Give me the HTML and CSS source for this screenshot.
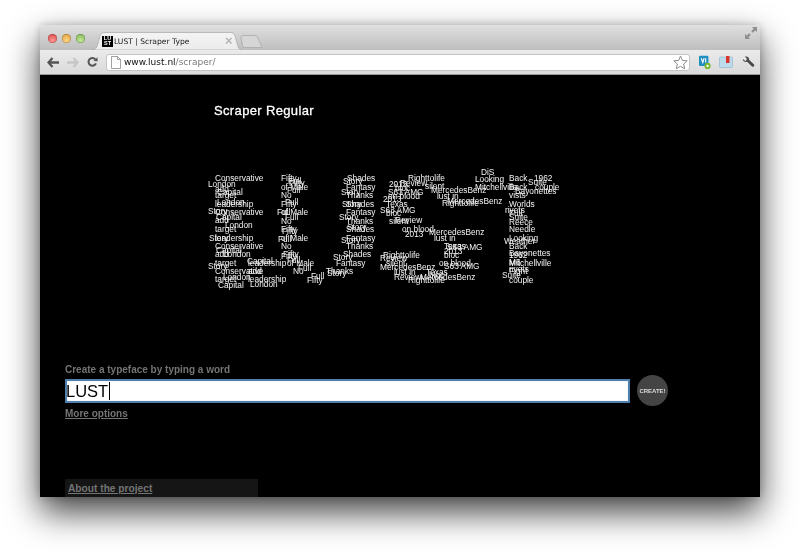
FILE: index.html
```html
<!DOCTYPE html>
<html lang="en">
<head>
  <meta charset="UTF-8" />
  <title>LUST | Scraper Type</title>
  <link rel="stylesheet" href="styles.css">
</head>
<body>

  <div class="window">
    <div class="titlebar">
      <div class="lights">
        <span class="light red"></span>
        <span class="light yellow"></span>
        <span class="light green"></span>
      </div>
      <div class="tab">
        <svg class="tab-shape" width="150" height="18" viewBox="0 0 150 18">
          <defs>
            <linearGradient id="tabfill" x1="0" y1="0" x2="0" y2="1">
              <stop offset="0" stop-color="#f4f4f4"/>
              <stop offset="1" stop-color="#ebebeb"/>
            </linearGradient>
          </defs>
          <path d="M0 18 C4 18 5 15 6 11 L8 4 C9 1 10.500 0.500 13 0.500 L138 0.500 C140.500 0.500 142 1 143 4 L145 11 C146 15 147 18 150 18 Z" fill="url(#tabfill)" stroke="#a8a8a8" stroke-width="0.7"/>
        </svg>
        <div class="favicon"><span>LU</span><span>ST</span></div>
        <div class="tab-title">LUST | Scraper Type</div>
        <div class="tab-close">×</div>
      </div>
      <svg class="newtab" width="24" height="13" viewBox="0 0 24 13">
        <path d="M3 12.500 L1 3 C0.800 1.400 1.600 0.500 3 0.500 L15 0.500 C16.400 0.500 17 1 17.600 2.400 L22 12.500 Z" fill="#d6d6d6" stroke="#a9a9a9" stroke-width="0.8"/>
      </svg>
      <svg class="expand" width="12" height="12" viewBox="0 0 12 12">
        <path d="M7 0 H12 V5 L10.200 3.400 L7.800 5.800 L6.200 4.200 L8.600 1.800 Z M5 12 H0 V7 L1.800 8.600 L4.200 6.200 L5.800 7.800 L3.400 10.200 Z" fill="#8f8f8f"/>
      </svg>
    </div>

    <div class="toolbar">
      <svg class="nav" width="12" height="11" viewBox="0 0 12 11">
        <path d="M5.500 1 L1.500 5.500 L5.500 10 M2 5.500 H12" fill="none" stroke="#555" stroke-width="2.300"/>
      </svg>
      <svg class="nav" width="12" height="11" viewBox="0 0 12 11">
        <path d="M6.500 1 L10.500 5.500 L6.500 10 M10 5.500 H0" fill="none" stroke="#c6c6c6" stroke-width="2.300"/>
      </svg>
      <svg class="nav" width="11" height="12" viewBox="0 0 13 13">
        <path d="M10.600 8.200 A4.600 4.600 0 1 1 9.800 3.200" fill="none" stroke="#555" stroke-width="2.400"/>
        <path d="M7.600 5.400 L12.600 5.600 L12.400 0.800 Z" fill="#555"/>
      </svg>
      <div class="omnibox">
        <svg class="page-icon" width="10" height="13" viewBox="0 0 10 13">
          <path d="M0.500 0.500 H6.500 L9.500 3.500 V12.500 H0.500 Z M6.500 0.500 V3.500 H9.500" fill="#fff" stroke="#8a8a8a" stroke-width="0.8"/>
        </svg>
        <div class="url">www.lust.nl<span class="url-path">/scraper/</span></div>
        <svg class="star" width="15" height="15" viewBox="0 0 15 15">
          <path d="M7.500 1 L9.400 5.400 L14.200 5.800 L10.600 9 L11.700 13.800 L7.500 11.300 L3.300 13.800 L4.400 9 L0.800 5.800 L5.600 5.400 Z" fill="#fff" stroke="#8c8c8c" stroke-width="1"/>
        </svg>
      </div>
      <svg class="ext ext-v" width="12" height="15" viewBox="0 0 14 16">
        <rect x="0" y="0" width="11" height="12" rx="1.500" fill="#1f8fc0"/>
        <path d="M2.500 3 L4.500 8 L6 3 M7.800 3 V8" fill="none" stroke="#fff" stroke-width="1.300"/>
        <circle cx="10" cy="12" r="3.600" fill="#76b82a"/>
        <circle cx="10" cy="12" r="1.400" fill="#fff"/>
      </svg>
      <svg class="ext ext-f" width="14" height="12" viewBox="0 0 14 12">
        <rect x="0.500" y="1" width="13" height="10.500" rx="1" fill="#bcdcee" stroke="#8db4cc" stroke-width="0.6"/>
        <rect x="7" y="0" width="3.500" height="7" fill="#d8342c"/>
      </svg>
      <svg class="ext ext-w" width="13" height="12" viewBox="0 0 15 14">
        <path d="M1 3.500 L3.600 5.800 L5.400 4.600 L5.200 2.400 L3.200 0.800 C6 -0.200 8.400 1.200 8.200 4.400 L14 10 C15 11.200 13 13.400 11.800 12.400 L6 6.800 C3.200 7.400 0.400 6 1 3.500 Z" fill="#4a4a4a"/>
      </svg>
    </div>

    <div class="page">
      <h1 class="type-name">Scraper Regular</h1>
      <div class="scatter" id="scatter"></div>

      <div class="create">
        <label class="create-label" for="word">Create a typeface by typing a word</label>
        <div class="create-row">
          <div class="word-input" id="word">LUST<span class="caret"></span></div>
          <button class="create-btn">CREATE!</button>
        </div>
        <a class="more" href="#">More options</a>
      </div>

      <div class="about">
        <a href="#">About the project</a>
      </div>
    </div>
  </div>

  <script src="script.js"></script>

</body>
</html>
```

FILE: styles.css
```css
html, body {
  margin: 0;
  padding: 0;
  height: 552px;
  overflow: hidden;
  background-color: #fff;
}

body {
  padding: 25px 40px 55px;
  box-sizing: border-box;
  font-family: "Liberation Sans", Arial, sans-serif;
}

.window {
  height: 472px;
  display: flex;
  flex-direction: column;
  border-radius: 4px 4px 0 0;
  box-shadow: 0 15px 34px rgba(0, 0, 0, 0.75), 0 0 8px rgba(0, 0, 0, 0.2);
  overflow: hidden;
  filter: blur(0.35px);
}

/* Title bar */
.titlebar {
  position: relative;
  height: 25px;
  flex: none;
  display: flex;
  align-items: flex-end;
  background: linear-gradient(#e0e0e0, #bebebe);
}

.lights {
  display: flex;
  gap: 5px;
  padding: 0 0 7px 8px;
}

.light {
  width: 9px;
  height: 9px;
  border-radius: 50%;
  box-shadow: inset 0 0 0 0.5px rgba(0, 0, 0, 0.3);
}

.red { background: radial-gradient(circle at 50% 70%, #ff9a96, #d5383a); }
.yellow { background: radial-gradient(circle at 50% 70%, #ffd98a, #d8912a); }
.green { background: radial-gradient(circle at 50% 70%, #c6e89a, #6fae48); }

.tab {
  position: relative;
  width: 150px;
  height: 18px;
  margin-left: 7px;
  display: flex;
  align-items: center;
  padding: 0 0 0 10px;
  box-sizing: border-box;
}

.tab-shape {
  position: absolute;
  left: 0;
  top: 0;
}

.favicon {
  position: relative;
  width: 11px;
  height: 11px;
  background-color: #000;
  color: #fff;
  font-size: 5.5px;
  font-weight: bold;
  line-height: 5.500px;
  display: flex;
  flex-direction: column;
  align-items: center;
  flex: none;
}

.tab-title {
  position: relative;
  margin-left: 1px;
  font-family: "DejaVu Sans", sans-serif;
  font-size: 7.6px;
  color: #222;
  white-space: nowrap;
}

.tab-close {
  position: absolute;
  left: 133px;
  top: 2px;
  font-size: 13px;
  font-weight: bold;
  line-height: 14px;
  color: #b5b5b5;
}

.newtab {
  position: absolute;
  left: 200px;
  top: 10px;
}

.expand {
  position: absolute;
  right: 3px;
  top: 2px;
}

/* Toolbar */
.toolbar {
  height: 25px;
  flex: none;
  display: flex;
  align-items: center;
  background: linear-gradient(#ebebeb, #dadada);
  border-bottom: 1px solid #9a9a9a;
  box-sizing: border-box;
  padding: 0 5px 0 7px;
}

.nav {
  flex: none;
  margin-right: 8px;
}

.omnibox {
  flex: 1;
  height: 17px;
  margin: 0 9px 0 0;
  display: flex;
  align-items: center;
  background-color: #fff;
  border: 1px solid #c4c4c4;
  border-radius: 3px;
  box-sizing: border-box;
  padding: 0 1px 0 4px;
}

.page-icon {
  flex: none;
}

.url {
  flex: 1;
  margin-left: 3px;
  font-family: "DejaVu Sans", sans-serif;
  font-size: 9px;
  color: #111;
}

.url-path {
  color: #777;
}

.star {
  flex: none;
}

.ext {
  flex: none;
}

.ext-f {
  margin: 0 9px 0 8px;
}

/* Page */
.page {
  position: relative;
  flex: 1;
  background-color: #000;
  overflow: hidden;
}

.type-name {
  margin: 27px 0 0 174px;
  font-size: 13px;
  font-weight: normal;
  line-height: 18px;
  letter-spacing: 0.35px;
  color: #fff;
  -webkit-text-stroke: 0.3px #fff;
}

.scatter {
  position: relative;
  height: 192px;
  margin: 45px 0 0 165px;
}

.word {
  position: absolute;
  font-size: 8.3px;
  line-height: 10px;
  color: #f4f4f4;
  white-space: nowrap;
}

.create {
  padding: 0 25px;
  margin-top: 6px;
}

.create-label {
  display: block;
  font-size: 10px;
  font-weight: bold;
  line-height: 14px;
  margin-bottom: -2px;
  color: #747474;
}

.create-row {
  display: flex;
  align-items: center;
  gap: 7px;
  height: 31px;
}

.word-input {
  width: 565px;
  height: 24px;
  box-sizing: border-box;
  background-color: #fff;
  border: 2px solid #4f7fae;
  box-shadow: inset 0 0 1px #9dc3e4;
  font-size: 16.5px;
  line-height: 20px;
  color: #000;
  display: flex;
  align-items: center;
  text-indent: -1px;
}

.caret {
  width: 1px;
  height: 18px;
  background-color: #000;
  margin-left: 1px;
}

.create-btn {
  width: 31px;
  height: 31px;
  padding: 0;
  border: none;
  border-radius: 50%;
  background-color: #444;
  color: #ddd;
  font-family: "Liberation Sans", Arial, sans-serif;
  font-size: 6px;
  font-weight: bold;
}

.more {
  display: block;
  margin-top: 2px;
  font-size: 10px;
  font-weight: bold;
  line-height: 12px;
  color: #747474;
}

.about {
  position: absolute;
  left: 25px;
  top: 404px;
  width: 190px;
  height: 30px;
  padding: 4px 0 0 3px;
  background-color: #151515;
  font-size: 10.2px;
  font-weight: bold;
  line-height: 12px;
}

.about a {
  color: #747474;
}
```

FILE: script.js
```js
// word, x, y in screenshot pixels (y is the middle of the line)
var ORIGIN_X = 205;
var ORIGIN_Y = 165;

var words = [
  ["Conservative",215,178],["London",208,184],["add",215,189],["Capital",217,192],["target",215,195],["London",217,202],["leadership",215,204],
  ["Story",208,211],["Conservative",215,212],["Capital",216,217],["add",215,220],["London",225,225],["target",215,229],["Story",209,238],["leadership",215,238],
  ["Conservative",215,246],["Capital",216,250],["add",215,254],["London",223,254],["Capital",247,261],["leadership",248,263],["target",215,263],["Story",208,266],
  ["Conservative",215,271],["add",248,271],["London",223,277],["target",215,279],["leadership",248,279],["London",250,284],["Capital",218,285],

  ["Fifty",281,178],["Full",288,181],["Fifty",289,183],["of Male",281,187],["Full",287,190],["No",281,195],["Full",285,202],["Fifty",281,204],
  ["Full",277,212],["of Male",281,212],["Full",285,217],["No",281,221],["Fifty",281,229],["Fifty",282,231],["of Male",281,238],["Full",278,239],
  ["No",281,246],["Fifty",283,254],["Fifty",281,256],["Full",287,260],["of Male",287,263],["Full",298,268],["No",293,271],["Full",311,276],["Fifty",307,280],

  ["Shades",347,178],["Story",343,181],["Fantasy",346,187],["Story",341,192],["Thanks",346,195],["Story",342,204],["Shades",346,204],
  ["Fantasy",346,212],["Story",339,217],["Thanks",346,221],["Story",347,227],["Shades",346,229],["Fantasy",346,238],["Story",341,240],["Thanks",346,246],
  ["Shades",343,254],["Story",333,257],["Fantasy",336,263],["Thanks",326,271],["Story",327,273],

  ["Righttolife",408,178],["Review",400,183],["2013",389,184],["silent",425,186],["bloc",395,188],["MercedesBenz",431,190],["S63 AMG",388,192],["on blood",388,196],["lust in",437,196],
  ["2013",383,199],["MercedesBenz",447,201],["Righttolife",442,203],["Texas",386,204],["S63 AMG",380,210],["bloc",386,213],["Review",395,220],["silent",389,221],
  ["on blood",402,229],["MercedesBenz",429,232],["2013",405,234],["lust in",434,238],["Texas",444,246],["S63 AMG",447,247],["2013",444,251],["bloc",444,255],
  ["Righttolife",383,255],["Review",380,258],["silent",386,263],["on blood",439,263],["S63 AMG",444,266],["MercedesBenz",380,267],["lust in",394,272],["Texas",426,272],
  ["bloc",429,275],["Review",394,277],["MercedesBenz",420,277],["Righttolife",408,280],

  ["DiS",481,172],["Looking",475,179],["Back",509,178],["1962",534,178],["Suite",528,182],["Mitchellville",475,187],["Back",509,187],["couple",535,187],["Bayonettes",515,191],
  ["vists",509,195],["Worlds",509,204],["rivets",505,210],["Full",509,213],["Suite",509,217],["Reece",509,222],["Needle",509,229],["Looking",509,238],["Weather",504,241],
  ["Back",509,246],["Bayonettes",509,253],["1962",509,255],["M6",509,262],["Mitchellville",509,263],["rivets",509,269],["Fight",509,271],["Suite",502,275],["couple",509,280]
];

var scatter = document.getElementById("scatter");

words.forEach(function (w) {
  var el = document.createElement("span");
  el.className = "word";
  el.textContent = w[0];
  el.style.left = (w[1] - ORIGIN_X) + "px";
  el.style.top = (w[2] - ORIGIN_Y - 5) + "px";
  scatter.appendChild(el);
});
```
